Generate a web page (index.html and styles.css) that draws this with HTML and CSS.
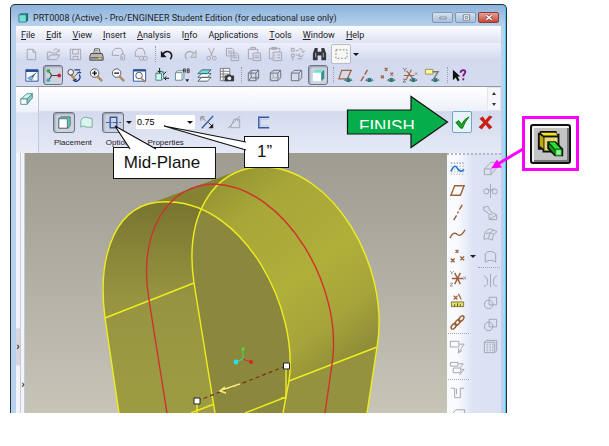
FILE: index.html
```html
<!DOCTYPE html>
<html lang="en">
<head>
<meta charset="utf-8">
<title>PRT0008 (Active) - Pro/ENGINEER Student Edition</title>
<link rel="stylesheet" href="styles.css">
</head>
<body>
<main class="stage">
<section class="window">
  <header class="titlebar">
    <svg class="app-icon" viewBox="0 0 12 12"><path d="M1 3l2-2h8v8l-2 2H1z" fill="#2a8f92"/><path d="M1 3h8v8H1z" fill="#6fe0d8" stroke="#37666f" stroke-width=".8"/><path d="M9 3l2-2v8l-2 2z" fill="#256c70"/></svg>
    <h1>PRT0008 (Active) - Pro/ENGINEER Student Edition (for educational use only)</h1>
    <div class="controls">
      <button aria-label="Minimize"><svg viewBox="0 0 20 10"><path d="M6.500 4.500h7v2h-7z" fill="#fff" stroke="#596575" stroke-width=".8"/></svg></button>
      <button aria-label="Maximize"><svg viewBox="0 0 20 10"><path d="M7 2h7v6H7zM9 4h3v2H9z" fill="#fff" stroke="#596575" stroke-width=".8"/></svg></button>
      <button class="close" aria-label="Close"><svg viewBox="0 0 20 10"><path d="M7 2.500l6 5M13 2.500l-6 5" stroke="#743a3c" stroke-width="3"/><path d="M7 2.500l6 5M13 2.500l-6 5" stroke="#fff" stroke-width="1.800"/></svg></button>
    </div>
  </header>
  <nav class="menu">
    <button><u>F</u>ile</button><button><u>E</u>dit</button><button><u>V</u>iew</button><button><u>I</u>nsert</button><button><u>A</u>nalysis</button><button>I<u>n</u>fo</button><button>A<u>p</u>plications</button><button><u>T</u>ools</button><button><u>W</u>indow</button><button><u>H</u>elp</button>
  </nav>
  <div class="toolbars">
    <div class="toolbar">
      <div class="group six">
        <button aria-label="New"><svg class="dim" viewBox="0 0 18 18"><path d="M4.500 3.500h6l3 3v8h-9zM10.500 3.500v3h3"/></svg></button>
        <button aria-label="Open"><svg class="dim" viewBox="0 0 18 18"><path d="M2.500 14.500v-8h4l1 1h5v2M2.500 14.500l3-5h10l-3 5zM9 5c2-3 4-2 5 0M15 3v3h-3"/></svg></button>
        <button aria-label="Save"><svg class="dim" viewBox="0 0 18 18"><path d="M3.500 3.500h11v11h-11zM6 3.500v5h6v-5M6.500 14v-3h5v3" /></svg></button>
        <button aria-label="Print"><svg viewBox="0 0 18 18"><path d="M6 8l1-5h5l1 5" fill="#fff" stroke="#555"/><path d="M3 8h12l1 3v4H2v-4z" fill="#b9b9b0" stroke="#444"/><path d="M3 12.500h12" stroke="#444"/><path d="M7 4.500h4M7 6.500h5" stroke="#777"/><path d="M11 13h3" stroke="#d9d64b" stroke-width="1.500"/></svg></button>
        <button aria-label="Send"><svg class="dim" viewBox="0 0 18 18"><path d="M2.500 10V6l3-3.500h6l2 4v3M2.500 10h7M11.500 15v-5c0-2 4-2 4 0v4c0 1.500-2.500 1.500-2.500 0v-3"/></svg></button>
        <button aria-label="Send link"><svg class="dim" viewBox="0 0 18 18"><path d="M3.500 11V6l3-3.500h5l2 4v3M3.500 11h4"/><circle cx="10" cy="13" r="2.200"/><circle cx="14" cy="13" r="2.200"/></svg></button>
      </div>
      <i class="grip"></i>
      <div class="group eight">
        <button aria-label="Undo"><svg viewBox="0 0 18 18"><path d="M4 9c4-7 13-1 8 5" fill="none" stroke="#17171d" stroke-width="1.700"/><path d="M2 5v7h6z" fill="#17171d"/></svg></button>
        <button aria-label="Redo"><svg viewBox="0 0 18 18"><path d="M14 9C10 2 1 8 6 14" fill="none" stroke="#a9acb4" stroke-width="1.500"/><path d="M16 5v7h-6z" fill="#d4d6dc" stroke="#a9acb4"/></svg></button>
        <button aria-label="Cut"><svg class="dim" viewBox="0 0 18 18"><path d="M6 2l4 9M12 2l-4 9"/><circle cx="6" cy="13" r="2"/><circle cx="12" cy="13" r="2"/></svg></button>
        <button aria-label="Copy"><svg class="dim" viewBox="0 0 18 18"><path d="M2.500 2.500h6l2 2v6h-8zM7.500 7.500h6l2 2v6h-8zM4 5.500h5M4 7.500h3M9 10.500h5M9 12.500h5"/></svg></button>
        <button aria-label="Paste"><svg class="dim" viewBox="0 0 18 18"><path d="M7 13.500H2.500v-10h10V7M5 3.500v-2h5v2zM7.500 7.500h8v8h-8zM9 10.500h5M9 12.500h5"/></svg></button>
        <button aria-label="Paste special"><svg class="dim" viewBox="0 0 18 18"><path d="M6 13.500H2.500v-11h11V6M5 3.500v-2h5v2zM6.500 6.500h9v9h-9zM8 9.500h1M11 9.500h3M8 12.500h1M11 12.500h3"/></svg></button>
        <button aria-label="Regenerate"><svg class="dim" viewBox="0 0 18 18"><path d="M2.500 2.500h3v3h-3zM2.500 8.500h3v3h-3zM4 12v3.500M7 5h3M7 9.500h3M9 13.500h5M10 4c2-2 5-1 5 2M13 5l2 2 2-2M15 9c0 2-3 3-5 1M11 8v3h3"/></svg></button>
        <button aria-label="Find"><svg viewBox="0 0 18 18"><path d="M2 15V8l2-6h3v4h4V2h3l2 6v7h-5v-5H7v5z" fill="#34353b"/><path d="M5 7v5M13 7v5" stroke="#bbb"/></svg></button>
      </div>
      <button class="select-box" aria-label="Select"><svg viewBox="0 0 20 20"><path d="M3.500 4.500h13v10h-13z" fill="none" stroke="#72726a" stroke-dasharray="2 2"/></svg></button>
      <button class="drop" aria-label="Selection options"></button>
    </div>
    <div class="toolbar">
      <div class="group ten">
        <button aria-label="Repaint"><svg viewBox="0 0 18 18"><path d="M3 3h13v12H3z" fill="#f7fbff" stroke="#285392"/><path d="M3 4h13" stroke="#285392" stroke-width="2.500"/><path d="M12 8l-7 4 4 2z" fill="#8bc9e8" stroke="#4b83a8"/><path d="M9 11l5-5" stroke="#555"/></svg></button>
        <button class="on" aria-label="Spin center"><svg viewBox="0 0 18 18"><path d="M4 4l3 5-3 5M7 9h7" fill="none" stroke="#444" stroke-width="1.200"/><circle cx="3.500" cy="4" r="2" fill="#22b549"/><circle cx="3.500" cy="14" r="2" fill="#30aebd"/><circle cx="15" cy="9" r="2" fill="#cc2038"/></svg></button>
        <button aria-label="Orient mode"><svg viewBox="0 0 18 18"><path d="M5 8l6 7" stroke="#bd844d" stroke-width="2.500"/><circle cx="5" cy="5.500" r="3" fill="#eef" stroke="#444"/><path d="M9 3h6M12 6h4M14 8c3 5-3 9-6 6l3-1" fill="none" stroke="#183b94" stroke-width="1.300"/><path d="M15 4l-6 6" stroke="#555"/></svg></button>
        <button aria-label="Zoom in"><svg viewBox="0 0 18 18"><path d="M10 10l5 5" stroke="#b88658" stroke-width="2.500"/><circle cx="7" cy="6.500" r="4.500" fill="#f6f8ff" stroke="#555"/><path d="M4.500 6.500h5M7 4v5" stroke="#111" stroke-width="1.500"/></svg></button>
        <button aria-label="Zoom out"><svg viewBox="0 0 18 18"><path d="M10 10l5 5" stroke="#b88658" stroke-width="2.500"/><circle cx="7" cy="6.500" r="4.500" fill="#f6f8ff" stroke="#555"/><path d="M4.500 6.500h5" stroke="#111" stroke-width="1.500"/></svg></button>
        <button aria-label="Refit"><svg viewBox="0 0 18 18"><path d="M2.500 3h13v12h-13z" fill="#fff" stroke="#285392"/><path d="M2.500 3.500h13" stroke="#285392" stroke-width="2.500"/><circle cx="8.500" cy="9" r="3.500" fill="#edf6fb" stroke="#555"/><path d="M11 12l4 4" stroke="#b88658" stroke-width="2"/></svg></button>
        <button aria-label="Reorient"><svg viewBox="0 0 18 18"><path d="M3 7l2-2h6v7l-2 2H3zM3 7h6v7M9 7l2-2" fill="#d7f4ed" stroke="#478984"/><path d="M7 1v5M5 4l2 2 2-2M17 12h-5M14 10l-2 2 2 2M14 5l-3 3" stroke="#111" fill="none"/></svg></button>
        <button aria-label="Saved views"><svg viewBox="0 0 18 18"><path d="M1.500 6l2-2h7v8l-2 2h-7zM1.500 6h7v8" fill="#fff" stroke="#5c8890"/><path d="M10 6V2h2v4M10 4h2M14 6V2h2v4h-2M14 4h2" fill="none" stroke="#222" stroke-width=".8"/><path d="M12 13h4l-2 3z" fill="#222"/></svg></button>
        <button aria-label="Layers"><svg viewBox="0 0 18 18"><path d="M2 15l4-4h10l-4 4zM2 11l4-4h10l-4 4z" fill="#fff" stroke="#4c6268"/><path d="M2 7l4-4h10l-4 4z" fill="#72d8dc" stroke="#376a72"/></svg></button>
        <button aria-label="View manager"><svg viewBox="0 0 18 18"><path d="M2.500 1.500h10v13h-10zM5.500 1.500v13M2.500 4.500h10M2.500 7.500h10M2.500 10.500h5" fill="#fff" stroke="#777"/><path d="M7 9h2l1-1h3l1 1h3v6H7z" fill="#343941"/><circle cx="12" cy="12" r="2" fill="#eee"/></svg></button>
      </div>
      <i class="grip"></i>
      <div class="group four">
        <button aria-label="Wireframe"><svg class="cube" viewBox="0 0 18 18"><path d="M3.500 6.500h8v8h-8zM6.500 3.500h8v8h-8zM3.500 6.500l3-3M11.500 6.500l3-3M3.500 14.500l3-3M11.500 14.500l3-3"/></svg></button>
        <button aria-label="Hidden line"><svg class="cube" viewBox="0 0 18 18"><path d="M3.500 6.500h8v8h-8zM3.500 6.500l3-3h8v8l-3 3M11.500 6.500l3-3"/><path d="M6.500 4v7.500h8M6 12l-3 3" stroke="#aaa"/></svg></button>
        <button aria-label="No hidden"><svg class="cube" viewBox="0 0 18 18"><path d="M3.500 6.500h8v8h-8zM3.500 6.500l3-3h8v8l-3 3M11.500 6.500l3-3"/></svg></button>
        <button class="on" aria-label="Shading"><svg viewBox="0 0 18 18"><path d="M3 6l3-3h9v9l-3 3H3z" fill="#70e1d3"/><path d="M3 6h9v9H3z" fill="#fff"/><path d="M12 6l3-3v9l-3 3z" fill="#3a8c87"/></svg></button>
      </div>
      <i class="grip"></i>
      <div class="group five">
        <button aria-label="Datum planes"><svg viewBox="0 0 18 18"><path d="M5 3.500h10l-4 9H2z" fill="none" stroke="#a1623e" stroke-width="1.300"/><path d="M8 14q4-4 8 0-4 3-8 0" fill="#c5dfda" stroke="#476f70"/><circle cx="12" cy="14" r="2" fill="#247b72"/></svg></button>
        <button aria-label="Datum axes"><svg viewBox="0 0 18 18"><path d="M2 15l3-5M6 8l3-5" stroke="#a1623e" stroke-width="1.500"/><path d="M7 14q4-4 8 0-4 3-8 0" fill="#c5dfda" stroke="#476f70"/><circle cx="11" cy="14" r="2" fill="#247b72"/></svg></button>
        <button aria-label="Datum points"><svg viewBox="0 0 18 18"><path d="M5 1l3 3M8 1L5 4M1 9l3 3M4 9l-3 3M11 6l3 3M14 6l-3 3" stroke="#a1623e" stroke-width="1.400"/><path d="M8 14q4-4 8 0-4 3-8 0" fill="#c5dfda" stroke="#476f70"/><circle cx="12" cy="14" r="2" fill="#247b72"/></svg></button>
        <button aria-label="Coordinate systems"><svg viewBox="0 0 18 18"><path d="M2 9h11M5 4l7 9M10 3L4 14" stroke="#a1623e" stroke-width="1.200"/><path d="M1 1l2 2 2-2M3 3v2M1 13h3l-3 3h3M14 6l2 2M16 6l-2 2" fill="none" stroke="#777"/><path d="M8 14q4-4 8 0-4 3-8 0" fill="#c5dfda" stroke="#476f70"/><circle cx="12" cy="14" r="2" fill="#247b72"/></svg></button>
        <button aria-label="Annotations"><svg viewBox="0 0 18 18"><path d="M1.500 2.500h8v5h-8z" fill="#fff999" stroke="#9b9447"/><path d="M9 5h6l-5 8" fill="none" stroke="#777" stroke-width="1.500"/><path d="M8 14q4-4 8 0-4 3-8 0" fill="#c5dfda" stroke="#476f70"/><circle cx="12" cy="14" r="2" fill="#247b72"/></svg></button>
      </div>
      <i class="grip"></i>
      <button aria-label="Context help"><svg viewBox="0 0 18 18"><path d="M2 3v11l3-3 2 4 2-1-2-4h3z" fill="#111"/><path d="M10 6c1-4 6-3 5 0-1 2-2 2-2 4M13 12v2" fill="none" stroke="#7c1983" stroke-width="2"/></svg></button>
    </div>
  </div>
  <section class="dashboard">
    <div class="feature"><svg viewBox="0 0 18 18"><path d="M2 9l7-6h6l-6 6z" fill="#c7f5ef" stroke="#4e8b8c"/><path d="M9 9l6-6v5l-6 7z" fill="#8bcac2" stroke="#4e8b8c"/><path d="M2 9h7v6H2z" fill="#fff" stroke="#4e8b8c"/></svg></div>
    <div class="dash-main">
      <div class="message"><div class="spinner"><button aria-label="Previous message"></button><button aria-label="Next message" class="drop"></button></div></div>
      <div class="options">
        <div class="dash-tools">
          <button class="on" aria-label="Solid"><svg viewBox="0 0 18 18"><path d="M3 5l2-2h10v9l-2 3H3z" fill="#62c7bd" stroke="#54706e"/><path d="M3 5h9v10H3z" fill="#fff" stroke="#54706e"/></svg></button>
          <button aria-label="Surface"><svg viewBox="0 0 18 18"><path d="M3 14V7q2-5 8-3l4 1v9H9q-3-3-6 0z" fill="#d9f5ee" stroke="#7ba8a1"/></svg></button>
          <button class="on mid" aria-label="Both sides"><svg viewBox="0 0 18 18"><path d="M5.500 3.500h7v11h-7z" fill="none" stroke="#315aa1" stroke-width="1.500"/><path d="M1 9h16" stroke="#315aa1" stroke-dasharray="4 1 1 1"/></svg></button>
          <button class="drop" aria-label="Depth options"></button>
          <div class="depth"><input aria-label="Depth" value="0.75"><button class="drop" aria-label="Recent depths"></button></div>
          <button class="flip" aria-label="Flip depth"><svg viewBox="0 0 18 18"><path d="M3 15L15 2" stroke="#315aa1" stroke-width="1.500"/><path d="M7 7L3 4M2 7V3h4" fill="none" stroke="#777"/><path d="M10 9l4 4" stroke="#222"/><path d="M15 10v5h-5z" fill="#222"/></svg></button>
          <button class="cutout" aria-label="Remove material"><svg class="dim" viewBox="0 0 18 18"><path d="M2 15L15 2M4.500 14.500h10v-9h-6zM10 5l4 3"/></svg></button>
          <button class="thin" aria-label="Thicken"><svg viewBox="0 0 18 18"><path d="M15 3.500H4v11h11" fill="none" stroke="#315aa1" stroke-width="1.500"/><path d="M15 5.500H6v7h9" fill="none" stroke="#b9c5e0"/></svg></button>
        </div>
        <div class="tabs"><button>Placement</button><button>Options</button><button>Properties</button></div>
        <div class="confirm"><button class="accept" aria-label="Accept"><svg viewBox="0 0 18 18"><path d="M2 9l3-2 3 4q3-6 8-8-4 4-7 12H7z" fill="#19a521" stroke="#087711"/></svg></button><button aria-label="Cancel"><svg viewBox="0 0 18 18"><path d="M3 5l3-2 3 4 4-5 3 1-5 6 5 5-3 2-4-5-4 5-3-2 5-5z" fill="#d51910" stroke="#95150f" stroke-width=".5"/></svg></button></div>
      </div>
    </div>
  </section>
  <div class="work">
    <div class="sashes"><div class="sash near"><button aria-label="Expand navigator">›</button></div><div class="sash"><button aria-label="Expand browser">›</button></div></div>
    <div class="viewport">
      <svg viewBox="25 153 422 260" preserveAspectRatio="xMidYMin slice" role="img" aria-label="Extruded slot model">
        <defs>
          <linearGradient id="wall" x1="0" y1="0" x2="0" y2="1"><stop offset="0" stop-color="#77752f"/><stop offset=".45" stop-color="#969440"/><stop offset="1" stop-color="#9e9c42"/></linearGradient>
          <linearGradient id="skin" gradientUnits="userSpaceOnUse" x1="205" y1="170" x2="350" y2="360"><stop offset="0" stop-color="#8e8e31"/><stop offset=".25" stop-color="#a7a638"/><stop offset=".6" stop-color="#b0af3a"/><stop offset=".82" stop-color="#a6a43a"/><stop offset="1" stop-color="#8f8e38"/></linearGradient>
        </defs>
        <path d="M119 413L105 318C97 260 110 217 152 203L240 170Q251 167 263 167C332 167 391 266 377 347L367 413Z" fill="url(#skin)"/>
        <path d="M289 381L377 347L367 413H283Z" fill="#94923f"/>
        <path d="M152 203L240 170C220 176 208 190 201 209C184 201 167 200 152 203Z" fill="#858332"/>
        <path d="M119 413L105 318C97 255 115 198 171 202Q186 202 201 209Q188 237 194 283L215 413Z" fill="url(#wall)"/>
        <path d="M201 209C261 236 297 316 289 381L283 413H215L194 283Q188 237 201 209Z" fill="#8a883c"/>
        <g fill="none" stroke="#eeed21" stroke-width="1.400">
          <path d="M119 413L105 318C97 255 115 198 171 202C244 205 299 307 289 381L283 413"/>
          <path d="M215 413L194 283C184 216 213 167 263 167C332 167 391 266 377 347L367 413"/>
          <path d="M105 318L194 283M289 381L377 347M191 413L213 404.500M245 413L286 397M286 369v28M197 404v9M281 398h5"/>
        </g>
        <path d="M167 413L149 300C138 234 166 184 215 184C284 187 344 286 332 364L325 413" fill="none" stroke="#cf3131" stroke-width="1.400"/>
        <path d="M197 401L286 366" stroke="#7c2e18" stroke-width="1.200" stroke-dasharray="4 3"/>
        <path d="M240 384l-18 6M225 387l-5 4 6 2" fill="none" stroke="#f5ed80" stroke-width="1.600"/>
        <path d="M243 349v10" stroke="#4ddc3d"/><path d="M243 359l-7 3" stroke="#2ad6dc"/><path d="M243 359l8 3" stroke="#d92727"/>
        <circle cx="243" cy="349" r="1.700" fill="#4ddc3d"/><circle cx="236" cy="362" r="2.400" fill="#27e1ea"/><circle cx="251" cy="362" r="1.900" fill="#dc2020"/>
        <path d="M283.500 363h6v6h-6zM194 398h6v6h-6z" fill="#fff" stroke="#222"/>
      </svg>
    </div>
    <aside class="features">
      <div class="column datum">
        <button aria-label="Sketch"><svg viewBox="0 0 18 18"><path d="M2 3h14M2 15h14M3 3v12M6 3v12M9 3v12M12 3v12M15 3v12" stroke="#7895b5" stroke-dasharray="1 2"/><path d="M2 12q4-9 7-3 3 5 7 1" fill="none" stroke="#2575ce" stroke-width="1.700"/></svg></button>
        <button aria-label="Plane"><svg class="brown" viewBox="0 0 18 18"><path d="M6 4h10l-4 10H2z"/></svg></button>
        <button aria-label="Axis"><svg class="brown" viewBox="0 0 18 18"><path d="M5 17l3-5M9 10l1-2M11 6l3-5"/></svg></button>
        <button aria-label="Curve"><svg class="brown" viewBox="0 0 18 18"><path d="M1 13q3-8 8-4 4 3 8-5"/></svg></button>
        <button class="with-drop" aria-label="Point"><svg class="brown" viewBox="0 0 18 18"><path d="M7 2l3 3M10 2L7 5M2 11l4 4M6 11l-4 4M12 9l4 4M16 9l-4 4"/></svg></button>
        <button aria-label="Coordinate system"><svg class="brown" viewBox="0 0 18 18"><path d="M3 9h12M6 3l6 12M12 3L6 15"/><path d="M1 1l2 2 2-2M3 3v2M1 14h3l-3 3h3M15 7l3 3M18 7l-3 3" stroke="#777" stroke-width=".8"/></svg></button>
        <button aria-label="Analysis feature"><svg viewBox="0 0 18 18"><path d="M2.500 10.500h13v5h-13z" fill="#e4df65" stroke="#77733c"/><path d="M6 13v2M9 12v3M12 13v2" stroke="#55522c"/><path d="M5 4l4 4M9 4L5 8M10 2l3 6" stroke="#a1623e" stroke-width="1.300"/></svg></button>
        <button aria-label="Reference"><svg viewBox="0 0 18 18"><g fill="none" stroke="#966132" stroke-width="1.600"><ellipse cx="5" cy="13" rx="3.500" ry="2" transform="rotate(-50 5 13)"/><ellipse cx="9" cy="9" rx="3.500" ry="2" transform="rotate(-50 9 9)"/><ellipse cx="13" cy="5" rx="3.500" ry="2" transform="rotate(-50 13 5)"/></g></svg></button>
        <i class="rule"></i>
        <button aria-label="Annotation"><svg class="dim" viewBox="0 0 18 18"><path d="M1.500 3.500h9v6h-9zM11 6.500h5l-6 9M10 11v5l4-3"/></svg></button>
        <button aria-label="Propagate"><svg class="dim" viewBox="0 0 18 18"><path d="M1.500 2.500h8v4h-8zM4.500 8.500h8v5h-8zM10 4h5l-3 4M13 10h3l-5 6"/></svg></button>
        <i class="rule"></i>
        <button aria-label="Hole"><svg class="dim" viewBox="0 0 18 18"><path d="M2 4.500h4v10h6v-10h4M8 5v6"/></svg></button>
        <button aria-label="Shell"><svg class="dim" viewBox="0 0 18 18"><path d="M3.500 15V8l4-4h9v11"/></svg></button>
      </div>
      <div class="column shapes">
        <button aria-label="Extrude"><svg class="dim" viewBox="0 0 18 18"><path d="M2.500 9.500h7v6h-7zM2.500 9.500l7-7h6v6l-6 7"/></svg></button>
        <button aria-label="Revolve"><svg class="dim" viewBox="0 0 18 18"><path d="M9 2v15"/><circle cx="4.500" cy="10" r="2.700"/><circle cx="13.500" cy="10" r="2.700"/><path d="M5 7l4 2 4-2"/></svg></button>
        <button aria-label="Sweep"><svg class="dim" viewBox="0 0 18 18"><path d="M1.500 3.500l5-1 2 5 7 4v5h-8v-5l-2-3-3-1zM8 16l7-4M8 11h3"/></svg></button>
        <button aria-label="Boundary blend"><svg class="dim" viewBox="0 0 18 18"><path d="M2 14q0-10 7-11l7 3q-5 3-5 9-5-3-9-1zM4 8q5-2 9 1M12 4q-5 4-5 9"/></svg></button>
        <button aria-label="Style"><svg class="dim" viewBox="0 0 18 18"><path d="M3.500 15V6q5-5 11 0v9q-5-4-11 0z"/></svg></button>
        <i class="rule"></i>
        <button aria-label="Mirror"><svg class="dim" viewBox="0 0 18 18"><path d="M9 2v14M2 4q4 1 4 6t-4 5M16 4q-4 1-4 6t4 5"/></svg></button>
        <button aria-label="Merge"><svg class="dim" viewBox="0 0 18 18"><path d="M7.500 3.500h8v8h-8z"/><circle cx="7" cy="11" r="4.500"/></svg></button>
        <button aria-label="Trim"><svg class="dim" viewBox="0 0 18 18"><path d="M7.500 3.500h8v8h-8z"/><circle cx="7" cy="11" r="4.500"/></svg></button>
        <button aria-label="Pattern"><svg class="dim" viewBox="0 0 18 18"><path d="M2.500 4.500l2-2h11v11l-2 2h-11zM2.500 4.500h11v11"/><path d="M5.500 6v8M8.500 6v8M11.500 6v8" stroke-dasharray="2 1"/></svg></button>
      </div>
    </aside>
  </div>
</section>

<p class="callout plane-note">Mid-Plane</p>
<p class="callout depth-note">1”</p>
<svg class="marks" viewBox="0 0 609 446">
  <path d="M130 149L115 126L156 149" fill="#fff" stroke="#111" stroke-width="1.200"/>
  <path d="M246 142L164 126L246 150" fill="#fff" stroke="#111" stroke-width="1.200"/>
  <path d="M347.500 110h63.500V96.500L447.500 122L411 147.500V134H347.500z" fill="#05ae4b" stroke="#111" stroke-width="1.200"/>
  <path d="M523 149L498 164" stroke="#f0f" stroke-width="3"/><path d="M491 168.500l6-9 5 8z" fill="#f0f"/>
</svg>
<p class="finish">FINISH</p>
<div class="inset"><button aria-label="Extrude tool"><svg viewBox="0 0 32 32">
  <path d="M2 8V4h2V2h18v3h3v17h-3v3H7v-3H2z" fill="#111"/>
  <path d="M5 4h16l2 3H8z" fill="#f4e51c"/><path d="M4 6l4 3v12l-4-3z" fill="#c0aa0b"/>
  <path d="M9 9h14v14H9z" fill="#eee26a"/><path d="M10 11h13M10 14h13M10 17h13M10 20h13" stroke="#c4b8a2" stroke-dasharray="2 2"/>
  <path d="M12 13h9l8 8v8h-9l-8-8z" fill="#111"/><path d="M14 14h6l6 7h-6z" fill="#24e52b"/><path d="M14 16l6 6v5l-6-7z" fill="#109b20"/><path d="M21 22h6v6h-6z" fill="#8df98a" stroke="#109b20"/>
</svg></button></div>
</main>
</body>
</html>
```
FILE: styles.css
```css
* { box-sizing: border-box; }
body { margin: 0; background: #fff; }
h1, p { margin: 0; font-weight: 400; }
button { border: 0; margin: 0; padding: 0; background: none; color: inherit; font: inherit; display: flex; align-items: center; justify-content: center; }
svg { display: block; }
button svg { width: 17px; height: 17px; }
.dim { fill: none; stroke: #a2a5ad; stroke-width: 1; }
.cube { fill: none; stroke: #696d78; }
.brown { fill: none; stroke: #9b603b; stroke-width: 1.5; }
.stage { position: relative; display: flex; height: 100vh; padding: 4px 102px 33px 10px; }
.window { flex: 1; min-width: 0; display: flex; flex-direction: column; padding: 0 5px; border: 1px solid #27303a; border-bottom: 0; border-radius: 5px 5px 0 0; background: linear-gradient(#8db3da, #b9d3ee 22px, #b9d0ef); box-shadow: inset -1px 0 #43c8ed; font: 9px/12px Roboto, "Open Sans", sans-serif; color: #1e2128; overflow: hidden; }
.titlebar { flex: none; display: flex; align-items: center; height: 21px; padding: 4px 2px 0 2px; gap: 4px; }
.titlebar h1 { flex: 1; font-size: 9px; line-height: 12px; white-space: nowrap; }
.app-icon { width: 11px; height: 11px; }
.controls { display: flex; gap: 2px; }
.controls button { width: 21px; height: 11px; border: 1px solid #8199b2; border-radius: 2px; background: linear-gradient(#d5e2f1, #a9c0d9); }
.controls svg { width: 18px; height: 9px; }
.controls .close { border-color: #8d3a35; background: linear-gradient(#e4a196, #c94936); }
.menu { flex: none; display: flex; align-items: center; gap: 11px; height: 17px; padding: 0 5px; background: linear-gradient(#fcfdff, #dde2f2); }
.toolbars { flex: none; display: flex; flex-direction: column; justify-content: center; height: 44px; padding: 0 5px; background: linear-gradient(#eef0fa, #d3d9ee 40%, #d6dcf0); border-bottom: 1px solid #8f95a6; }
.toolbar { display: flex; align-items: center; height: 21px; gap: 1px; }
.group { display: grid; justify-items: center; }
.six { width: 130px; grid-template-columns: repeat(6, 1fr); }
.eight { width: 173px; grid-template-columns: repeat(8, 1fr); }
.ten { width: 216px; grid-template-columns: repeat(10, 1fr); }
.four { width: 86px; grid-template-columns: repeat(4, 1fr); }
.five { width: 108px; grid-template-columns: repeat(5, 1fr); }
.toolbar button { width: 20px; height: 20px; }
.grip { width: 4px; height: 16px; border-right: 1px dotted #969cad; }
.on { border: 1px solid #6d7488; border-radius: 3px; background: #cfd3e0; box-shadow: inset 1px 1px 2px #9095a8; }
.toolbar .select-box { border: 1px solid #b9bcc5; background: #f7f7f6; border-radius: 2px; }
.drop::before { content: ""; border: 3px solid transparent; border-top-color: #15171d; border-bottom: 0; }
.toolbar .drop { width: 8px; }
.dashboard { flex: none; display: flex; height: 66px; background: #dde2f3; }
.feature { width: 23px; padding: 4px 3px; border-right: 1px solid #c3c8d7; background: linear-gradient(#fff, #eef1fb 25px, #dde2f3 26px, #e9ecf7); }
.feature svg { width: 16px; height: 16px; }
.dash-main { flex: 1; display: flex; flex-direction: column; }
.message { display: flex; justify-content: flex-end; height: 24px; background: linear-gradient(#fff, #edf0fa); }
.spinner { width: 14px; border: 1px solid #e4e6ee; background: #f7f7fb; }
.spinner button { width: 12px; height: 11px; }
.spinner button::before { content: ""; border: 2px solid transparent; border-bottom: 3px solid #333; border-top: 0; }
.spinner .drop::before { border: 2px solid transparent; border-top: 3px solid #333; border-bottom: 0; }
.options { flex: 1; display: grid; grid-template-columns: 1fr auto; grid-template-rows: 22px 20px; padding: 0 6px 0 14px; background: linear-gradient(#d4daee, #e5e9f6); }
.dash-tools { display: flex; align-items: center; }
.dash-tools > button { width: 22px; height: 21px; }
.dash-tools .mid { margin-left: 5px; }
.dash-tools .drop { width: 10px; }
.depth { display: flex; align-items: center; width: 59px; height: 14px; margin-left: 2px; background: #fff; }
.depth input { flex: 1; min-width: 0; height: 12px; border: 0; padding: 0 1px; background: none; font: 9px/12px "Liberation Sans", sans-serif; }
.dash-tools .flip { margin-left: 1px; }
.dash-tools .cutout { margin-left: 5px; }
.dash-tools .thin { margin-left: 7px; }
.tabs { grid-row: 2; display: flex; gap: 14px; align-items: center; padding-left: 1px; font: 8px/10px "Liberation Sans", sans-serif; }
.confirm { grid-column: 2; grid-row: 1; display: flex; gap: 3px; }
.confirm button { width: 20px; height: 22px; }
.confirm .accept { border: 1px solid #6ba9c6; border-radius: 2px; background: #e7f4fa; }
.work { flex: 1; min-height: 0; display: flex; background: #dde2f3; }
.sashes { width: 9px; display: grid; grid-template-columns: 5px 4px; background: #f3f5fa; }
.sash { border-right: 1px solid #c5cad5; }
.sash button { width: 4px; height: 38px; font-size: 10px; font-weight: 700; color: #111; margin-top: 213px; }
.near button { margin-top: 175px; background: #d8d6dc; border-radius: 2px; }
.viewport { flex: 1; min-width: 0; background: linear-gradient(#9e9c90, #c7c4b8); }
.viewport svg { width: 100%; height: 100%; }
.features { display: flex; width: 54px; border-top: 2px dotted #b4b8c6; background: linear-gradient(90deg, #fafbff 10px, #dde3f4 26px, #dbe1f3); overflow: hidden; }
.column { display: flex; flex-direction: column; align-items: center; padding-top: 2px; }
.datum { width: 20px; }
.shapes { width: 20px; margin-left: 13px; }
.column button { position: relative; flex: none; width: 20px; height: 22px; }
.rule { flex: none; width: 24px; height: 2px; border-top: 1px dotted #a2a7b6; }
.with-drop::after { content: ""; position: absolute; left: 23px; top: 10px; border: 3px solid transparent; border-top-color: #222; border-bottom: 0; }
.callout { position: absolute; border: 1px solid #111; background: #fff; color: #111; font: 17px/30px "Liberation Sans", sans-serif; text-align: center; }
.plane-note { left: 113px; top: 147px; width: 103px; height: 32px; padding-right: 5px; }
.depth-note { left: 244px; top: 136px; width: 45px; height: 32px; padding-right: 4px; }
.marks { position: absolute; left: 0; top: 0; width: 609px; height: 446px; pointer-events: none; }
.finish { position: absolute; left: 359px; top: 118px; height: 11px; overflow: hidden; color: #fff; font: 17px/17px "Liberation Sans", sans-serif; }
.inset { position: absolute; left: 522px; top: 116px; width: 57px; height: 55px; padding: 5px; border: 3px solid #f0f; background: #fff; }
.inset button { width: 41px; height: 40px; border: 2px solid #111; border-radius: 3px; background: #c3c3c3; box-shadow: inset 2px 2px #f2f2f2, inset -2px -2px #777; }
.inset svg { width: 30px; height: 30px; }
```
